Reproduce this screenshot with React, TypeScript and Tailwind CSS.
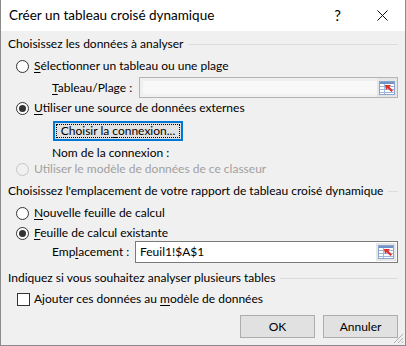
import React from "react";

const U = ({ children }: { children: React.ReactNode }) => (
  <span className="underline underline-offset-[2px] decoration-[1px]">{children}</span>
);

const Radio = ({ checked, disabled }: { checked?: boolean; disabled?: boolean }) => (
  <div
    className={
      "w-[13px] h-[13px] rounded-full border flex items-center justify-center shrink-0 " +
      (disabled ? "border-[#c6c6c6] bg-[#f0f0f0]" : "border-[#333333] bg-white")
    }
  >
    {checked && <div className="w-[7px] h-[7px] rounded-full bg-[#333333]" />}
  </div>
);

const RangeIcon = () => (
  <div className="w-[20px] self-stretch bg-[#e6e6e6] flex items-center justify-center shrink-0">
    <svg width="16" height="14" viewBox="0 0 16 14">
      <rect x="0.5" y="0.5" width="15" height="13" fill="#ffffff" stroke="#8aa6d0" />
      <rect x="1" y="1" width="14" height="2" fill="#6f93c9" />
      <line x1="1" y1="5.5" x2="15" y2="5.5" stroke="#9fb6dc" />
      <line x1="1" y1="8.5" x2="15" y2="8.5" stroke="#9fb6dc" />
      <line x1="1" y1="11.5" x2="15" y2="11.5" stroke="#9fb6dc" />
      <line x1="5.5" y1="3" x2="5.5" y2="13" stroke="#9fb6dc" />
      <polygon points="6,4 12,4 10.3,5.7 14,9.4 12.4,11 8.7,7.3 7,9" fill="#e0302a" />
    </svg>
  </div>
);

const Header = ({ children, className = "" }: { children: React.ReactNode; className?: string }) => (
  <div className={"h-[16px] flex items-center " + className}>
    <span className="whitespace-nowrap">{children}</span>
    <div className="flex-1 h-px bg-[#dcdcdc] ml-[5px]" />
  </div>
);

export default function App() {
  return (
    <div
      className="w-[406px] h-[346px] flex flex-col bg-[#f0f0f0] border-x border-b border-[#8a8a8a] text-[12px] text-black relative overflow-hidden"
      style={{ fontFamily: "Lato, 'Noto Sans', sans-serif" }}
    >
      {/* Title bar */}
      <div className="h-[31px] bg-white flex items-center pl-[8px] shrink-0">
        <span className="text-[13.5px]">Créer un tableau croisé dynamique</span>
        <span className="ml-auto text-[15px] mr-[36px]">?</span>
        <svg width="11" height="11" viewBox="0 0 11 11" className="mr-[17px]">
          <line x1="0.5" y1="0.5" x2="10.5" y2="10.5" stroke="#111" strokeWidth="1" />
          <line x1="10.5" y1="0.5" x2="0.5" y2="10.5" stroke="#111" strokeWidth="1" />
        </svg>
      </div>

      <div className="flex flex-col pl-[7px] pr-[7px]">
        <Header className="mt-[5px]">Choisissez les données à analyser</Header>

        <div className="h-[16px] mt-[6px] flex items-center pl-[8px] gap-[5px]">
          <Radio />
          <span>
            <U>S</U>électionner un tableau ou une plage
          </span>
        </div>

        <div className="h-[21px] mt-[3px] flex items-center">
          <span className="pl-[44px] w-[131px] shrink-0">
            <U>T</U>ableau/Plage :
          </span>
          <div className="flex-1 h-full border border-[#b4b4b4] bg-[#f0f0f0] flex">
            <div className="flex-1 m-[3px] mr-0 bg-[#f8f8f8]" />
            <RangeIcon />
          </div>
        </div>

        <div className="h-[16px] mt-[2px] flex items-center pl-[8px] gap-[5px]">
          <Radio checked />
          <span>
            <U>U</U>tiliser une source de données externes
          </span>
        </div>

        <div className="mt-[5px] pl-[45px] flex">
          <div className="w-[130px] h-[20px] border-2 border-[#0078d7] bg-[#e1e1e1] p-[1px] flex">
            <div className="flex-1 border border-dotted border-black flex items-center justify-center leading-none">
              <span>
                Choisir la <U>c</U>onnexion...
              </span>
            </div>
          </div>
        </div>

        <div className="h-[16px] mt-[4px] flex items-center pl-[44px]">Nom de la connexion :</div>

        <div className="h-[16px] flex items-center pl-[8px] gap-[5px] text-[#a0a0a0]">
          <Radio disabled />
          <span>Utiliser le modèle de données de ce classeur</span>
        </div>

        <Header className="mt-[6px]">Choisissez l'emplacement de votre rapport de tableau croisé dynamique</Header>

        <div className="h-[16px] mt-[6px] flex items-center pl-[8px] gap-[5px]">
          <Radio />
          <span>
            <U>N</U>ouvelle feuille de calcul
          </span>
        </div>

        <div className="h-[16px] mt-[4px] flex items-center pl-[8px] gap-[5px]">
          <Radio checked />
          <span>
            <U>F</U>euille de calcul existante
          </span>
        </div>

        <div className="h-[22px] flex items-center">
          <span className="pl-[44px] w-[127px] shrink-0">
            Emp<U>l</U>acement :
          </span>
          <div className="flex-1 h-full border border-[#7a7a7a] bg-white flex items-center">
            <span className="pl-[4px] flex-1">Feuil1!$A$1</span>
            <div className="h-[18px] flex items-center mr-[1px]">
              <RangeIcon />
            </div>
          </div>
        </div>

        <Header className="mt-[7px]">Indiquez si vous souhaitez analyser plusieurs tables</Header>

        <div className="h-[16px] mt-[5px] flex items-center pl-[9px] gap-[4px]">
          <div className="w-[13px] h-[13px] border border-[#333333] bg-white shrink-0" />
          <span>
            Ajouter ces données au <U>m</U>odèle de données
          </span>
        </div>

        <div className="mt-[8px] flex justify-end gap-[8px]">
          <div className="w-[75px] h-[23px] border border-[#adadad] bg-[#e1e1e1] flex items-center justify-center">
            OK
          </div>
          <div className="w-[75px] h-[23px] border border-[#adadad] bg-[#e1e1e1] flex items-center justify-center">
            Annuler
          </div>
        </div>
      </div>

      <svg width="12" height="12" viewBox="0 0 12 12" className="absolute right-[1px] bottom-[1px]">
        <line x1="11" y1="2" x2="2" y2="11" stroke="#b0b0b0" />
        <line x1="11" y1="6" x2="6" y2="11" stroke="#b0b0b0" />
        <line x1="11" y1="9.5" x2="9.5" y2="11" stroke="#b0b0b0" />
      </svg>
    </div>
  );
}
